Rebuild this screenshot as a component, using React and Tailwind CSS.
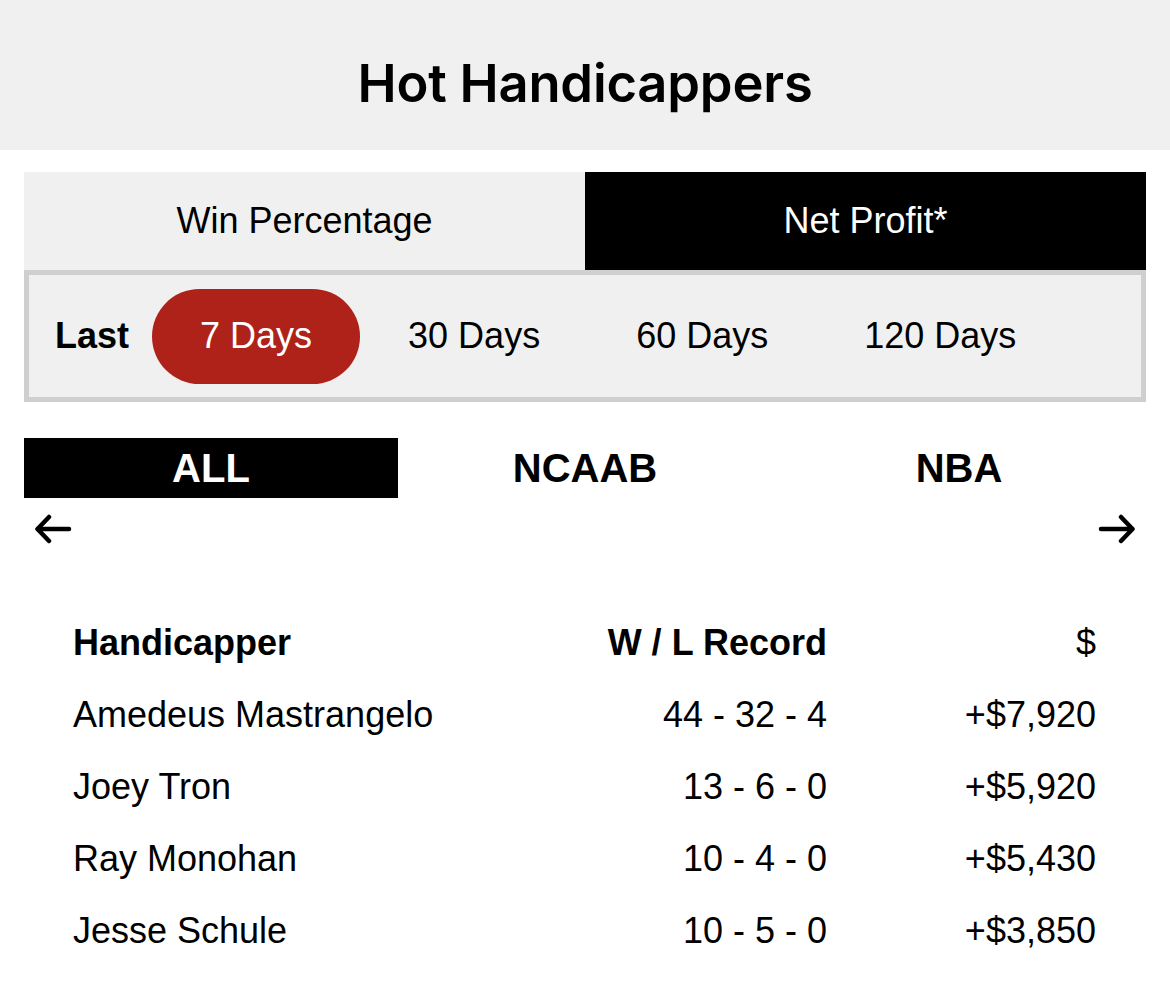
import React from "react";

const rows = [
  ["Amedeus Mastrangelo", "44 - 32 - 4", "+$7,920"],
  ["Joey Tron", "13 - 6 - 0", "+$5,920"],
  ["Ray Monohan", "10 - 4 - 0", "+$5,430"],
  ["Jesse Schule", "10 - 5 - 0", "+$3,850"],
];

function Arrow({ dir }) {
  return (
    <svg width="38" height="30" viewBox="0 0 38 30" fill="none" stroke="black" strokeWidth="4.5" strokeLinecap="round" strokeLinejoin="round" className={dir === "right" ? "rotate-180" : ""}>
      <path d="M35 15H4" />
      <path d="M15 3L3.5 15L15 27" />
    </svg>
  );
}

export default function App() {
  return (
    <div className="w-[1170px] h-[986px] bg-white text-black font-['Liberation_Sans',Arial,sans-serif] overflow-hidden">
      <div className="h-[150px] bg-[#f0f0f0] flex items-center justify-center">
        <h1 className="font-['Inter',sans-serif] font-semibold text-[52.5px] tracking-[-0.2px] leading-none mt-[17px]">Hot Handicappers</h1>
      </div>
      <div className="px-[24px]">
        <div className="mt-[22px] h-[98px] grid grid-cols-2 text-[36px]">
          <div className="bg-[#f0f0f0] flex items-center justify-center">Win Percentage</div>
          <div className="bg-black text-white flex items-center justify-center">Net Profit*</div>
        </div>
        <div className="h-[132px] border-[5px] border-[#cfcfcf] bg-[#f0f0f0] flex items-center pl-[26px] text-[36px]">
          <span className="font-bold">Last</span>
          <span className="ml-[23px] h-[95px] px-[48px] rounded-full bg-[#ae2219] text-white flex items-center">7 Days</span>
          <span className="px-[48px]">30 Days</span>
          <span className="px-[48px]">60 Days</span>
          <span className="px-[48px]">120 Days</span>
        </div>
        <div className="mt-[36px] h-[60px] grid grid-cols-3 text-[40px] font-bold">
          <div className="bg-black text-white flex items-center justify-center">ALL</div>
          <div className="flex items-center justify-center">NCAAB</div>
          <div className="flex items-center justify-center">NBA</div>
        </div>
        <div className="h-[62px] flex items-center justify-between px-[10px]">
          <Arrow dir="left" />
          <Arrow dir="right" />
        </div>
        <div className="mt-[47px] pl-[49px] pr-[50px] text-[36px]">
          <div className="h-[72px] flex items-center font-bold">
            <div className="flex-1">Handicapper</div>
            <div className="w-[320px] text-right">W / L Record</div>
            <div className="w-[269px] text-right font-normal">$</div>
          </div>
          {rows.map((r) => (
            <div key={r[0]} className="h-[72px] flex items-center">
              <div className="flex-1">{r[0]}</div>
              <div className="w-[320px] text-right">{r[1]}</div>
              <div className="w-[269px] text-right">{r[2]}</div>
            </div>
          ))}
        </div>
      </div>
    </div>
  );
}
